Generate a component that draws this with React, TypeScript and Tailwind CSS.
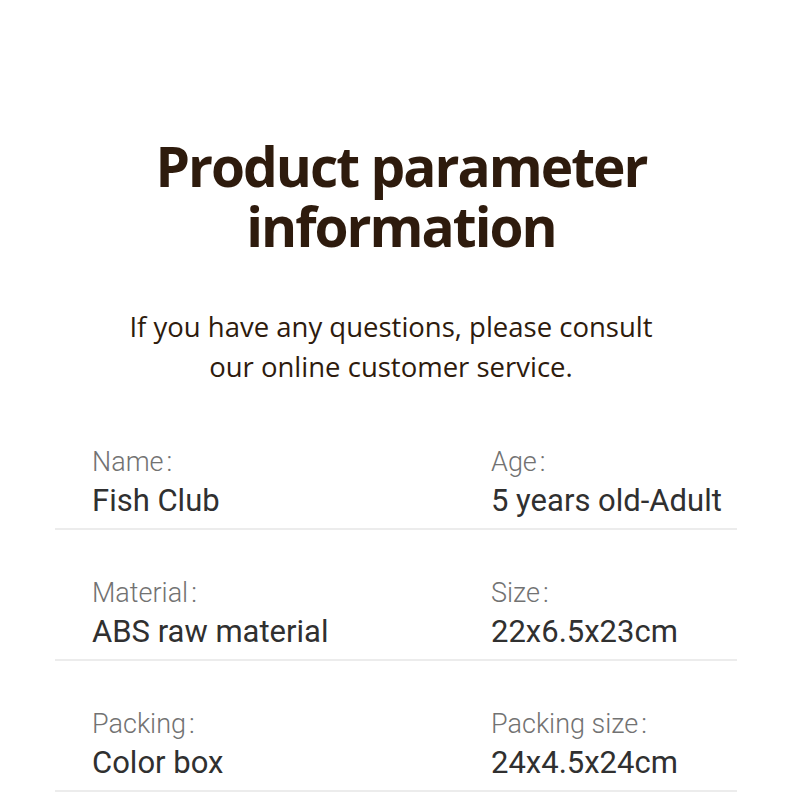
import React from "react";

const rows = [
  [
    { label: "Name", value: "Fish Club" },
    { label: "Age", value: "5 years old-Adult" },
  ],
  [
    { label: "Material", value: "ABS raw material" },
    { label: "Size", value: "22x6.5x23cm" },
  ],
  [
    { label: "Packing", value: "Color box" },
    { label: "Packing size", value: "24x4.5x24cm" },
  ],
];

const App: React.FC = () => {
  return (
    <div className="w-[790px] h-[811px] bg-white overflow-hidden">
      <div className="pt-[136px] flex flex-col items-center text-[#2e1b0d]">
        <h1 className="ml-[12px] font-['Open_Sans',sans-serif] font-bold text-[55px] leading-[60px] text-center tracking-[-2px]">
          Product parameter
          <br />
          information
        </h1>
        <p className="mt-[51px] mr-[8px] font-['Open_Sans',sans-serif] text-[27.5px] leading-[40px] text-center">
          If you have any questions, please consult
          <br />
          our online customer service.
        </p>
      </div>

      <div className="mt-[12px] mx-[55px] w-[682px]">
        {rows.map((row, i) => (
          <div
            key={i}
            className="grid grid-cols-[399px_1fr] h-[131px] border-b-2 border-[#ececec] pt-[45px]"
          >
            {row.map((cell) => (
              <div key={cell.label} className="pl-[37px]">
                <div className="font-['Roboto',sans-serif] font-light text-[27px] leading-[36px] text-[#727272]">
                  {cell.label}
                  <span className="ml-[3px]">:</span>
                </div>
                <div className="font-['Roboto',sans-serif] text-[31px] leading-[42px] text-[#303030]">
                  {cell.value}
                </div>
              </div>
            ))}
          </div>
        ))}
      </div>
    </div>
  );
};

export default App;
